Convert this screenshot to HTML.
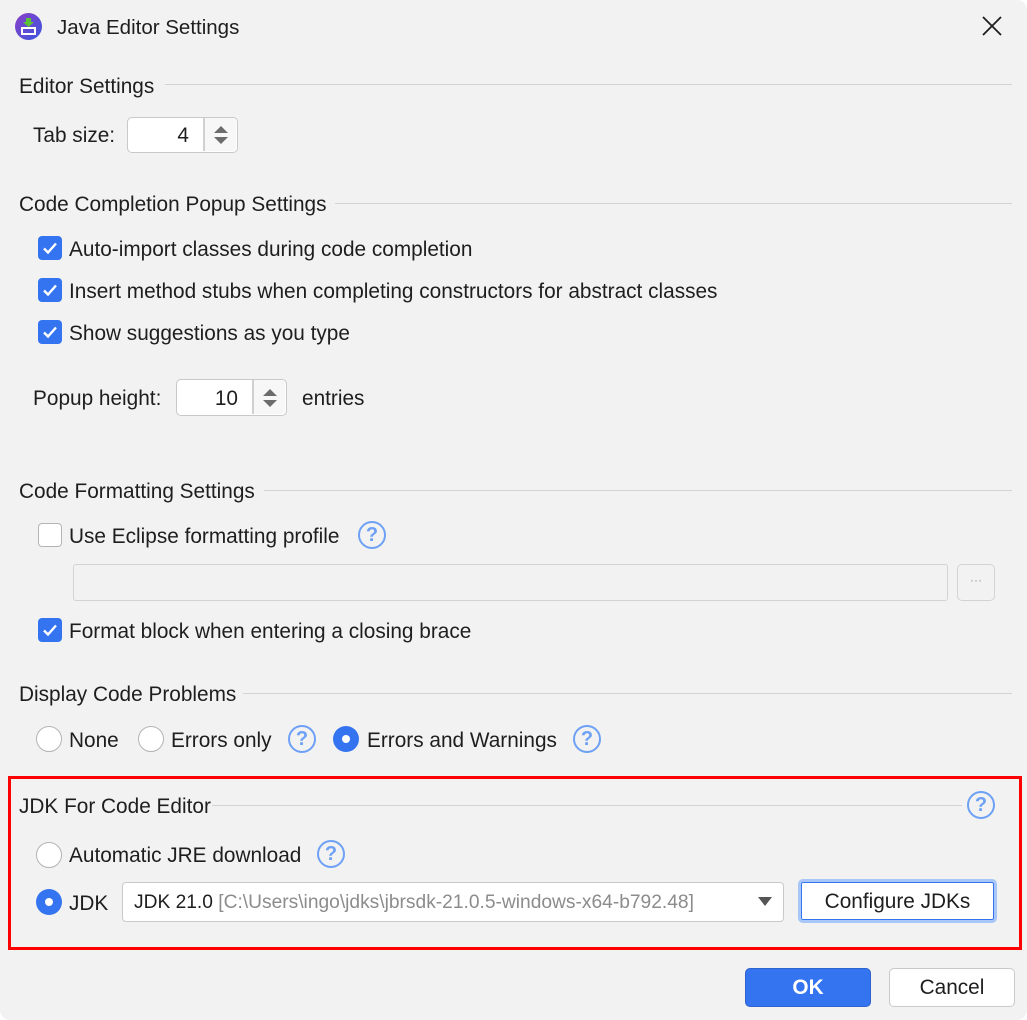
<!DOCTYPE html>
<html><head><meta charset="utf-8"><style>
*{box-sizing:border-box;margin:0;padding:0}
body{width:1027px;height:1020px;background:#fff;font-family:"Liberation Sans",sans-serif;font-size:20.8px;color:#1e1e1e;overflow:hidden;position:relative}
#win{position:absolute;left:0;top:0;width:1027px;height:1020px;background:#f2f2f2;border-radius:0 10px 10px 10px}
.t{position:absolute;line-height:24px;white-space:nowrap;margin-top:2px}
.ln{position:absolute;height:1px;background:#d3d3d3}
.cb{position:absolute;width:24px;height:24px;border-radius:4px;background:#3574f0}
.cb svg{position:absolute;left:0;top:0}
.cbu{position:absolute;width:24px;height:24px;border-radius:4px;background:#fff;border:1.5px solid #b4b4b4}
.rd{position:absolute;width:26px;height:26px;border-radius:50%;background:#fff;border:1.5px solid #b4b4b4}
.rds{position:absolute;width:26px;height:26px;border-radius:50%;background:#3574f0}
.rds:after{content:"";position:absolute;left:9px;top:9px;width:8px;height:8px;border-radius:50%;background:#fff}
.hp{position:absolute;width:28px;height:28px;border-radius:50%;border:2.2px solid #6ea1f5;color:#6ea1f5;font-size:20px;font-weight:bold;line-height:24px;text-align:center}
.sp{position:absolute;background:#fff;border:1.5px solid #c9c9c9;border-radius:5px}
.btn{position:absolute;border-radius:5px;text-align:center;line-height:36px}
</style></head><body><div id="win">
<svg style="position:absolute;left:15px;top:13px" width="27" height="27" viewBox="0 0 27 27"><defs><linearGradient id="g" x1="0" y1="0" x2="1" y2="1"><stop offset="0" stop-color="#8a3fc7"/><stop offset="1" stop-color="#3a56e0"/></linearGradient></defs><circle cx="13.5" cy="13.5" r="13.5" fill="url(#g)"/><path d="M11 5h5v4h3l-5.5 5-5.5-5h3z" fill="#5bc236"/><rect x="7" y="15" width="13" height="6" fill="none" stroke="#fff" stroke-width="2"/></svg>
<div class="t" style="left:57px;top:14px;font-size:20.5px">Java Editor Settings</div>
<svg style="position:absolute;left:982px;top:16px" width="20" height="20"><path d="M1 1L19 19M19 1L1 19" stroke="#1e1e1e" stroke-width="1.8"/></svg>

<div class="t" style="left:19px;top:73px">Editor Settings</div><div class="ln" style="left:165px;width:847px;top:84px"></div>
<div class="t" style="left:33px;top:122px">Tab size:</div>
<div class="sp" style="left:127px;top:117px;width:111px;height:36px"><div style="position:absolute;left:75px;top:0;width:1.5px;height:33px;background:#d0d0d0"></div><div style="position:absolute;left:77px;top:0;width:31px;height:33px;background:#f7f7f7;border-radius:0 4px 4px 0"></div><div class="t" style="right:48px;top:4px">4</div><svg style="position:absolute;left:85px;top:7px" width="16" height="20"><path d="M1 8L8 1L15 8ZM1 12L8 19L15 12Z" fill="#6c6c6c"/></svg></div>

<div class="t" style="left:19px;top:191px">Code Completion Popup Settings</div><div class="ln" style="left:335px;width:677px;top:203px"></div>
<div class="cb" style="left:38px;top:236px"><svg width="24" height="24"><path d="M6 12.5l4 4 8-9" stroke="#fff" stroke-width="2.4" fill="none"/></svg></div>
<div class="t" style="left:69px;top:236px">Auto-import classes during code completion</div>
<div class="cb" style="left:38px;top:278px"><svg width="24" height="24"><path d="M6 12.5l4 4 8-9" stroke="#fff" stroke-width="2.4" fill="none"/></svg></div>
<div class="t" style="left:69px;top:278px">Insert method stubs when completing constructors for abstract classes</div>
<div class="cb" style="left:38px;top:320px"><svg width="24" height="24"><path d="M6 12.5l4 4 8-9" stroke="#fff" stroke-width="2.4" fill="none"/></svg></div>
<div class="t" style="left:69px;top:320px">Show suggestions as you type</div>
<div class="t" style="left:33px;top:385px">Popup height:</div>
<div class="sp" style="left:176px;top:379px;width:111px;height:37px"><div style="position:absolute;left:75px;top:0;width:1.5px;height:34px;background:#d0d0d0"></div><div style="position:absolute;left:77px;top:0;width:31px;height:34px;background:#f7f7f7;border-radius:0 4px 4px 0"></div><div class="t" style="right:48px;top:5px">10</div><svg style="position:absolute;left:85px;top:8px" width="16" height="20"><path d="M1 8L8 1L15 8ZM1 12L8 19L15 12Z" fill="#6c6c6c"/></svg></div>
<div class="t" style="left:302px;top:385px">entries</div>

<div class="t" style="left:19px;top:478px">Code Formatting Settings</div><div class="ln" style="left:264px;width:748px;top:490px"></div>
<div class="cbu" style="left:38px;top:523px"></div>
<div class="t" style="left:69px;top:523px">Use Eclipse formatting profile</div>
<div class="hp" style="left:358px;top:521px">?</div>
<div style="position:absolute;left:73px;top:564px;width:875px;height:37px;border:1.5px solid #d3d3d3;border-radius:3px;background:#f2f2f2"></div>
<div style="position:absolute;left:957px;top:564px;width:38px;height:37px;border:1.5px solid #d3d3d3;border-radius:5px;text-align:center;font-size:12px;line-height:30px;color:#999">···</div>
<div class="cb" style="left:38px;top:618px"><svg width="24" height="24"><path d="M6 12.5l4 4 8-9" stroke="#fff" stroke-width="2.4" fill="none"/></svg></div>
<div class="t" style="left:69px;top:618px">Format block when entering a closing brace</div>

<div class="t" style="left:19px;top:681px">Display Code Problems</div><div class="ln" style="left:243px;width:769px;top:693px"></div>
<div class="rd" style="left:36px;top:726px"></div><div class="t" style="left:69px;top:727px">None</div>
<div class="rd" style="left:138px;top:726px"></div><div class="t" style="left:171px;top:727px">Errors only</div>
<div class="hp" style="left:288px;top:725px">?</div>
<div class="rds" style="left:333px;top:726px"></div><div class="t" style="left:367px;top:727px">Errors and Warnings</div>
<div class="hp" style="left:573px;top:725px">?</div>

<div style="position:absolute;left:8px;top:776px;width:1014px;height:174px;border:3px solid #f00"></div>
<div class="t" style="left:19px;top:793px">JDK For Code Editor</div><div class="ln" style="left:212px;width:750px;top:805px"></div>
<div class="hp" style="left:967px;top:791px">?</div>
<div class="rd" style="left:36px;top:842px"></div><div class="t" style="left:69px;top:842px">Automatic JRE download</div>
<div class="hp" style="left:317px;top:840px">?</div>
<div class="rds" style="left:36px;top:889px"></div><div class="t" style="left:69px;top:890px">JDK</div>
<div class="sp" style="left:122px;top:882px;width:662px;height:40px;border-radius:4px"><div class="t" style="left:11px;top:6px;font-size:19.2px">JDK 21.0 <span style="color:#8c8c8c">[C:\Users\ingo\jdks\jbrsdk-21.0.5-windows-x64-b792.48]</span></div><svg style="position:absolute;left:635px;top:14px" width="14" height="10"><path d="M0 0H14L7 9Z" fill="#555"/></svg></div>
<div class="btn" style="left:798px;top:879px;width:199px;height:44px;border:3px solid #a8c6f7;background:#fff;line-height:40px;box-shadow:inset 0 0 0 1px #3574f0">Configure JDKs</div>

<div class="btn" style="left:745px;top:968px;width:126px;height:39px;background:#3574f0;color:#fff;font-weight:bold;border:1px solid #2f63cc;line-height:38px">OK</div>
<div class="btn" style="left:889px;top:968px;width:126px;height:39px;background:#fff;border:1.5px solid #c9c9c9;line-height:38px">Cancel</div>
</div></body></html>
